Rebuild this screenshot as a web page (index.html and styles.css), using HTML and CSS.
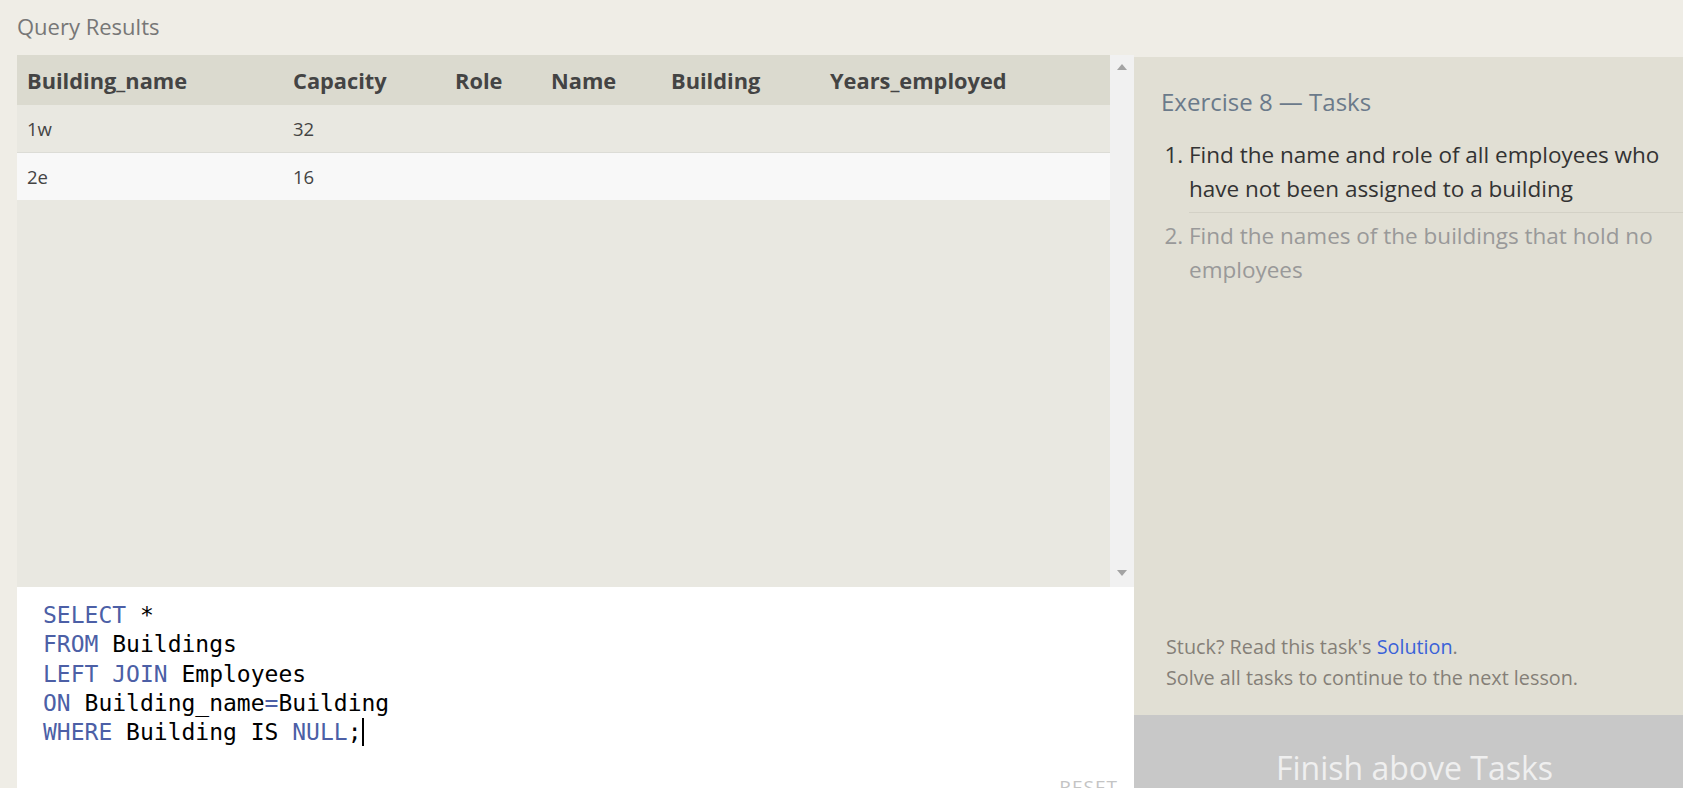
FILE: index.html
```html
<!DOCTYPE html>
<html>
<head>
<meta charset="utf-8">
<link rel="stylesheet" href="styles.css">
</head>
<body>
<div class="page">
  <div class="title">Query Results</div>
  <div class="main">
    <div class="left">
      <div class="results">
        <div class="table-wrap">
          <table class="grid">
            <thead>
              <tr>
                <th class="c1">Building_name</th>
                <th class="c2">Capacity</th>
                <th class="c3">Role</th>
                <th class="c4">Name</th>
                <th class="c5">Building</th>
                <th class="c6">Years_employed</th>
              </tr>
            </thead>
            <tbody>
              <tr class="odd"><td>1w</td><td>32</td><td></td><td></td><td></td><td></td></tr>
              <tr class="even"><td>2e</td><td>16</td><td></td><td></td><td></td><td></td></tr>
            </tbody>
          </table>
        </div>
        <div class="scrollbar">
          <span class="arrow up"></span>
          <span class="arrow down"></span>
        </div>
      </div>
      <div class="editor">
        <pre class="code"><span class="kw">SELECT</span> *
<span class="kw">FROM</span> Buildings
<span class="kw">LEFT JOIN</span> Employees
<span class="kw">ON</span> Building_name<span class="op">=</span>Building
<span class="kw">WHERE</span> Building IS <span class="kw">NULL</span>;<span class="cursor"></span></pre>
        <div class="reset">RESET</div>
      </div>
    </div>
    <div class="right">
      <div class="tasks">
        <h2 class="heading">Exercise 8 — Tasks</h2>
        <ol class="task-list">
          <li class="task active">Find the name and role of all employees who have not been assigned to a building</li>
          <li class="task">Find the names of the buildings that hold no employees</li>
        </ol>
      </div>
      <div class="help">
        <p>Stuck? Read this task's <a class="link">Solution</a>.</p>
        <p>Solve all tasks to continue to the next lesson.</p>
      </div>
      <div class="finish">Finish above Tasks</div>
    </div>
  </div>
</div>
</body>
</html>
```
FILE: styles.css
```css
html, body {
  margin: 0;
  padding: 0;
  height: 100%;
  overflow: hidden;
}
body {
  background: #efede6;
  font-family: "Open Sans", "Noto Sans", sans-serif;
  color: #333;
}
.page {
  display: flex;
  flex-direction: column;
}
.title {
  height: 55px;
  box-sizing: border-box;
  padding: 11px 0 0 17px;
  font-size: 22px;
  line-height: 30px;
  color: #777;
}
.main {
  display: flex;
  align-items: flex-start;
}
.left {
  margin-left: 17px;
  width: 1117px;
  display: flex;
  flex-direction: column;
}
.results {
  height: 532px;
  display: flex;
  background: #e9e8e1;
}
.table-wrap {
  flex: 1;
}
.grid {
  border-collapse: collapse;
  width: 100%;
  table-layout: fixed;
}
.grid th {
  background: #dbdacf;
  height: 50px;
  padding: 0 0 0 10px;
  text-align: left;
  font-size: 21.8px;
  font-weight: 700;
  color: #444;
}
.grid .c1 { width: 256px; }
.grid .c2 { width: 152px; }
.grid .c3 { width: 86px; }
.grid .c4 { width: 110px; }
.grid .c5 { width: 149px; }
.grid td {
  height: 47px;
  padding: 0 0 0 10px;
  font-size: 18.5px;
  color: #444;
}
.grid tr.odd td {
  background: #e9e8e1;
  border-bottom: 1px solid #dcdcd6;
}
.grid tr.even td {
  background: #f8f8f8;
}
.scrollbar {
  width: 24px;
  background: #f1f1f1;
  display: flex;
  flex-direction: column;
  justify-content: space-between;
  align-items: center;
  padding: 9px 0 11px;
  box-sizing: border-box;
}
.arrow {
  width: 0;
  height: 0;
  border-left: 5px solid transparent;
  border-right: 5px solid transparent;
}
.arrow.up { border-bottom: 6px solid #a3a3a3; }
.arrow.down { border-top: 6px solid #a3a3a3; }
.editor {
  background: #fff;
  height: 260px;
  box-sizing: border-box;
  padding: 14px 16px 0 26px;
  display: flex;
  flex-direction: column;
}
.code {
  margin: 0;
  font-family: "DejaVu Sans Mono", "Liberation Mono", monospace;
  font-size: 23px;
  line-height: 29.3px;
  color: #000;
}
.kw { color: #4c5fa6; }
.op { color: #4c5fa6; }
.cursor {
  display: inline-block;
  width: 2px;
  height: 28px;
  background: #000;
  vertical-align: -6px;
}
.reset {
  align-self: flex-end;
  margin-top: 27px;
  font-size: 19px;
  color: #c4c4c4;
  letter-spacing: 1px;
}
.right {
  margin-top: 2px;
  width: 549px;
  display: flex;
  flex-direction: column;
}
.tasks {
  height: 545px;
  background: #e1dfd4;
  padding: 30px 0 0 27px;
  box-sizing: border-box;
}
.heading {
  margin: 0;
  font-size: 24px;
  font-weight: 400;
  color: #6b7a8a;
  line-height: 30px;
}
.task-list {
  margin: 21px 0 0;
  padding: 0 0 0 28px;
  font-size: 22.5px;
  line-height: 34px;
}
.task {
  color: #999;
}
.task.active {
  color: #333;
  padding-bottom: 6px;
  border-bottom: 1px solid #d3d1c6;
  margin-bottom: 6px;
}
.help {
  background: #e1dfd4;
  height: 113px;
  box-sizing: border-box;
  padding: 0 0 22px 32px;
  display: flex;
  flex-direction: column;
  justify-content: flex-end;
  font-size: 19.8px;
  line-height: 31px;
  color: #857f78;
}
.help p { margin: 0; }
.link { color: #3a62d8; }
.finish {
  height: 110px;
  background: #c8c8c8;
  color: #efefef;
  font-size: 32px;
  line-height: 44px;
  text-align: center;
  padding: 31px 0 0 12px;
  box-sizing: border-box;
}
```
